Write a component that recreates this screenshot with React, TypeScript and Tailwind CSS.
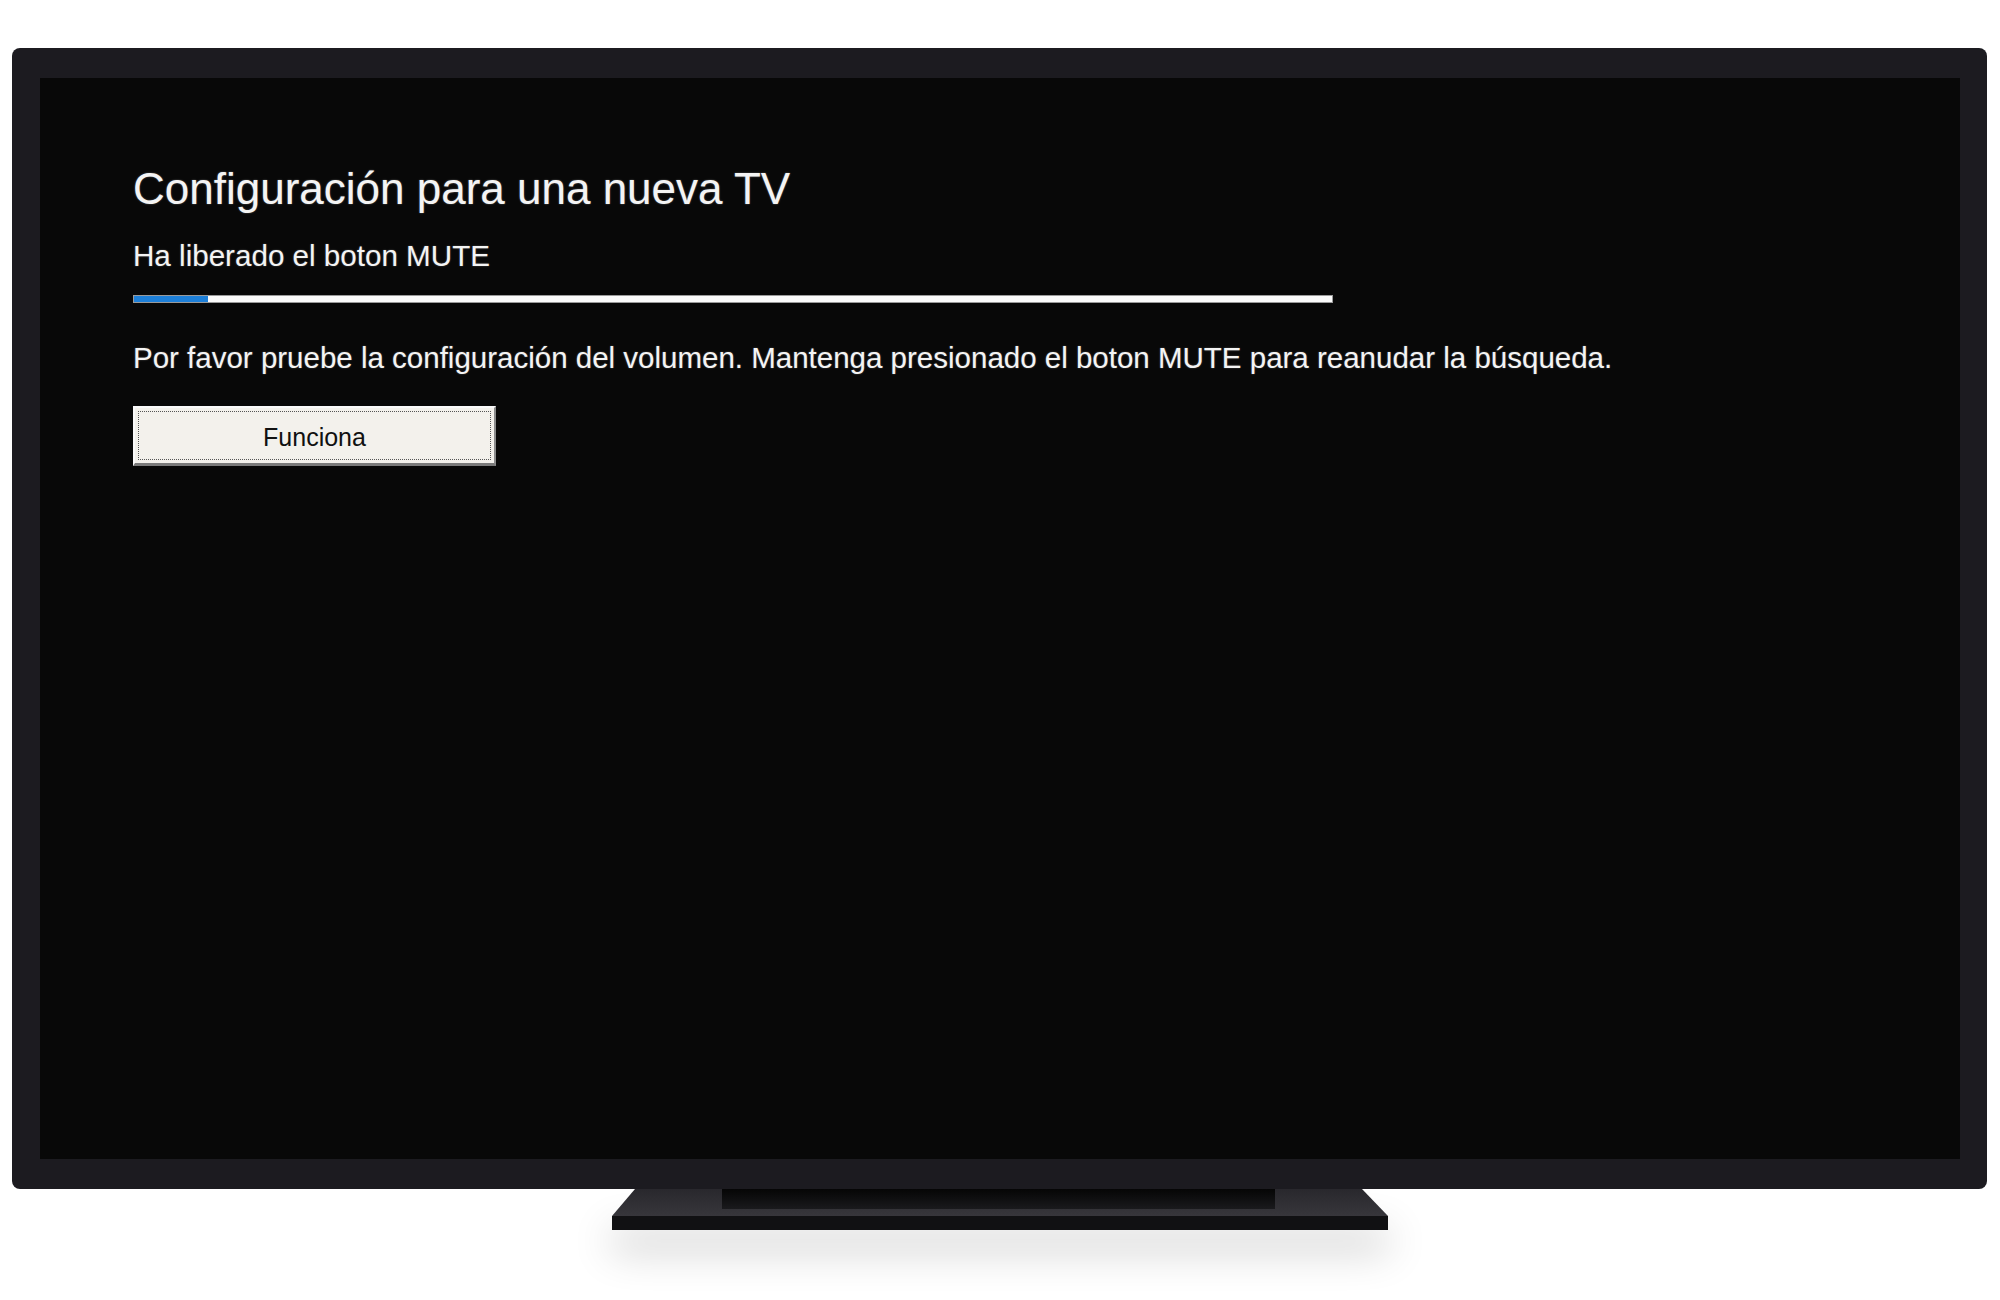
export default function App() {
  return (
    <div className="w-[2000px] h-[1300px] bg-white overflow-hidden" style={{ fontFamily: '"Liberation Sans", Arial, sans-serif' }}>
      <div className="pt-[48px] pl-[12px]">
        {/* TV frame */}
        <div className="w-[1975px] h-[1141px] bg-[#1c1b20] rounded-[8px] pt-[30px] pl-[28px] pr-[27px] pb-[30px]">
          <div className="w-full h-full bg-[#080808] pl-[93px] pt-[85px] text-[#f4f4f4]">
            <h1 className="text-[44px] leading-[52px] [text-shadow:0_0_2px_rgba(255,255,255,0.35)]">
              Configuración para una nueva TV
            </h1>
            <p className="mt-[23px] text-[29.6px] leading-[35px] [text-shadow:0_0_2px_rgba(255,255,255,0.3)]">
              Ha liberado el boton MUTE
            </p>
            <div className="mt-[22px] w-[1200px] h-[8px] bg-[#fbfbfb] border border-[#9a9a9a] flex">
              <div className="w-[74px] h-full bg-[#1d7fd8]" />
            </div>
            <p className="mt-[37px] text-[29.5px] leading-[35px] [text-shadow:0_0_2px_rgba(255,255,255,0.3)]">
              Por favor pruebe la configuración del volumen. Mantenga presionado el boton MUTE para reanudar la búsqueda.
            </p>
            <button className="mt-[31px] w-[363px] h-[60px] bg-[#f3f1ec] border-t-2 border-l-2 border-t-[#fafafa] border-l-[#fafafa] border-r-2 border-b-[3px] border-r-[#8a8a8a] border-b-[#7a7a7a] p-[3px]">
              <div className="w-full h-full border border-dotted border-[#555] flex items-center justify-center pt-[4px] text-[25px] text-[#111]">
                Funciona
              </div>
            </button>
          </div>
        </div>
        {/* Stand */}
        <div className="w-[776px] ml-[600px] flex flex-col">
          <div className="h-[27px] bg-gradient-to-b from-[#29282d] to-[#37363b] [clip-path:polygon(23px_0,calc(100%-26px)_0,100%_100%,0_100%)] flex">
            <div className="ml-[110px] w-[553px] h-[20px] bg-gradient-to-b from-[#060606] to-[#1a1a1d]" />
          </div>
          <div className="h-[14px] bg-[#111113] shadow-[0_18px_40px_rgba(0,0,0,0.3)]" />
        </div>
      </div>
    </div>
  );
}
